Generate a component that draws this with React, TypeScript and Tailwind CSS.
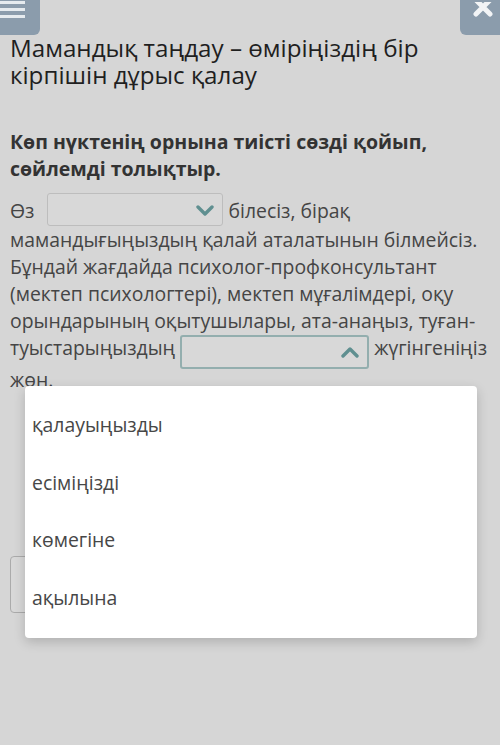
import React from "react";

const options = ["қалауыңызды", "есіміңізді", "көмегіне", "ақылына"];

function Chevron({ up = false }: { up?: boolean }) {
  return (
    <svg width="18" height="12" viewBox="0 0 18 12" className="absolute right-[8px] top-1/2 -translate-y-1/2">
      <path
        d={up ? "M2 10 L9 3 L16 10" : "M2 3 L9 10 L16 3"}
        fill="none"
        stroke="#5f8f90"
        strokeWidth="3.4"
        strokeLinecap="round"
        strokeLinejoin="round"
      />
    </svg>
  );
}

export default function App() {
  return (
    <div
      className="relative w-[500px] h-[745px] overflow-hidden bg-[#d6d6d6] text-[#3d3d3d]"
      style={{ fontFamily: '"Open Sans", "Noto Sans", sans-serif' }}
    >
      <div className="flex justify-between h-[35px]">
        <button className="w-[40px] h-[35px] rounded-br-[6px] bg-[#8b9cac] flex flex-col justify-center gap-[4px] pl-0 pb-[16px]">
          <span className="block w-[25px] h-[3px] bg-[#e6ebef]" />
          <span className="block w-[25px] h-[3px] bg-[#e6ebef]" />
          <span className="block w-[25px] h-[3px] bg-[#e6ebef]" />
        </button>
        <button className="w-[40px] h-[35px] rounded-bl-[6px] bg-[#8b9cac] flex items-start justify-end pr-[6px] pt-[2px]">
          <svg width="22" height="16" viewBox="0 0 22 16">
            <path d="M4 -2 L18 12 M18 -2 L4 12" stroke="#f2f4f6" strokeWidth="5" strokeLinecap="round" />
          </svg>
        </button>
      </div>

      <h1 className="px-[10px] -mt-[1px] text-[24.2px] leading-[27px] text-[#1f1f1f]">
        Мамандық таңдау – өміріңіздің бір кірпішін дұрыс қалау
      </h1>

      <p className="px-[10px] mt-[40px] text-[19.5px] leading-[27px] font-bold text-[#333]">
        Көп нүктенің орнына тиісті сөзді қойып, сөйлемді толықтыр.
      </p>

      <p className="px-[10px] pr-[12px] mt-[15px] text-[19.4px] leading-[27px] text-[#454545]">
        Өз
        <span className="relative inline-block align-middle w-[176px] h-[33px] ml-[12px] mr-[6px] -mt-[6px] rounded-[3px] border border-[#bdbdbd] bg-[#d8d8d8]">
          <Chevron />
        </span>
        білесіз, бірақ мамандығыңыздың қалай аталатынын білмейсіз. Бұндай жағдайда психолог-профконсультант
        (мектеп психологтері), мектеп мұғалімдері, оқу орындарының оқытушылары, ата-анаңыз, туған-туыстарыңыздың
        <span className="relative inline-block align-middle w-[189px] h-[34px] ml-[5px] mr-[5px] -mb-[3px] rounded-[3px] border-2 border-[#93aeae] bg-[#d8d8d8]">
          <Chevron up />
        </span>
        жүгінгеніңіз жөн.
      </p>

      <div className="px-[10px] mt-[163px]">
        <button className="w-[120px] h-[57px] rounded-[4px] border border-[#ababab] bg-[#d8d8d8]" />
      </div>

      <ul className="absolute left-[25px] top-[386px] w-[452px] h-[252px] rounded-[4px] bg-white shadow-[0_4px_12px_rgba(0,0,0,0.18)] py-[10px]">
        {options.map((o) => (
          <li key={o} className="h-[57.5px] flex items-center pl-[7px] text-[19.4px] text-[#474747]">
            {o}
          </li>
        ))}
      </ul>
    </div>
  );
}
